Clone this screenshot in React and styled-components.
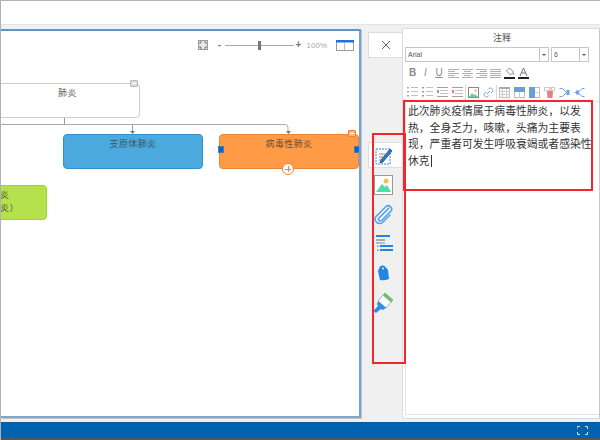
import React from "react";
import styled, { createGlobalStyle } from "styled-components";

const GlobalStyle = createGlobalStyle`
  html, body {
    margin: 0;
    padding: 0;
    background: #fff;
  }
  body {
    font-family: "Liberation Sans", "Noto Sans CJK SC", sans-serif;
  }
`;

const CJK = `"Liberation Sans", "Noto Sans CJK SC", sans-serif`;

const Window = styled.div`
  position: relative;
  width: 600px;
  height: 440px;
  display: flex;
  flex-direction: column;
  box-sizing: border-box;
  border-top: 1px solid #b4b4b4;
  border-left: 1px solid #b0b0b0;
  overflow: hidden;
`;

const TopBar = styled.div`
  height: 23px;
  flex: none;
  background: #fff;
`;

const Main = styled.div`
  flex: 1;
  display: flex;
  min-height: 0;
  background: #f0f0f0;
  padding-top: 4px;
  border-top: 1px solid #e4e4e4;
`;

const Canvas = styled.div`
  position: relative;
  width: 360px;
  height: 389px;
  flex: none;
  box-sizing: border-box;
  background: #fff;
  border-top: 2px solid #5b97cb;
  border-right: 2px solid #6ea3d2;
  border-bottom: 2px solid #7ba7cc;
  box-shadow: 1px 1px 0 #c4c4c4;
  overflow: hidden;
`;

const ZoomBar = styled.div`
  position: absolute;
  top: 7px;
  right: 5px;
  display: flex;
  align-items: center;
  height: 14px;
  color: #777;
`;

const ZoomSign = styled.span`
  font-size: 10px;
  font-weight: bold;
  line-height: 10px;
  width: 8px;
  text-align: center;
  color: #777;
`;

const ZoomTrack = styled.div`
  position: relative;
  width: 69px;
  height: 1px;
  margin: 0 1px;
  background: #aaa;
`;

const ZoomThumb = styled.div`
  position: absolute;
  left: 33px;
  top: -4px;
  width: 3px;
  height: 9px;
  background: #777;
`;

const ZoomValue = styled.span`
  font-size: 8px;
  color: #a8a8a8;
  margin: 0 9px 0 4px;
`;

const Links = styled.svg`
  position: absolute;
  left: 0;
  top: 0;
`;

const tones = {
  plain: { bg: "#fff", line: "#cdcdcd", text: "#5f5f5f" },
  blue: { bg: "#4ba9dd", line: "#2f92cc", text: "#3a5668" },
  orange: { bg: "#ff9a47", line: "#f28233", text: "#6f4f34" },
  green: { bg: "#b5e24c", line: "#9ed133", text: "#4c5c32" },
};

const MapNode = styled.div`
  position: absolute;
  left: ${(p) => p.$x}px;
  top: ${(p) => p.$y}px;
  width: ${(p) => p.$w}px;
  height: 35px;
  box-sizing: border-box;
  padding: 3px 0 0 ${(p) => p.$inset || 0}px;
  background: ${(p) => tones[p.$tone].bg};
  border: 1px solid ${(p) => tones[p.$tone].line};
  border-radius: 4px;
  color: ${(p) => tones[p.$tone].text};
  font-family: ${CJK};
  font-size: 9px;
  letter-spacing: 0.4px;
  line-height: 13px;
  text-align: ${(p) => (p.$inset ? "left" : "center")};
  white-space: pre;
`;

const NoteMark = styled.div`
  position: absolute;
  left: ${(p) => p.$x}px;
  top: ${(p) => p.$y}px;
  width: 8px;
  height: 7px;
  box-sizing: border-box;
  background: ${(p) => p.$bg};
  border: 1px solid ${(p) => p.$line};
  border-radius: 1px;
  &::after {
    content: "";
    display: block;
    margin: 2px 1px 0;
    height: 1px;
    background: ${(p) => p.$mark};
  }
`;

const Handle = styled.div`
  position: absolute;
  left: ${(p) => p.$x}px;
  top: 115px;
  width: 6px;
  height: 7px;
  background: #0f62c8;
  border: 0.5px solid #4a79b0;
  box-sizing: border-box;
`;

const AddButton = styled.div`
  position: absolute;
  left: 281px;
  top: 132px;
  width: 12px;
  height: 12px;
  box-sizing: border-box;
  border-radius: 50%;
  background: #fff;
  border: 1px solid #f28233;
  &::before,
  &::after {
    content: "";
    position: absolute;
    background: #f28233;
  }
  &::before {
    left: 2px;
    top: 4.500px;
    width: 6px;
    height: 1px;
  }
  &::after {
    left: 4.500px;
    top: 2px;
    width: 1px;
    height: 6px;
  }
`;

const SideColumn = styled.div`
  width: 41px;
  flex: none;
  display: flex;
  flex-direction: column;
  align-items: flex-end;
`;

const CloseTab = styled.div`
  width: 34px;
  height: 26px;
  margin-top: 3px;
  box-sizing: border-box;
  background: #fff;
  border: 1px solid #dcdcdc;
  border-right: none;
  display: flex;
  align-items: center;
  justify-content: center;
`;

const TabList = styled.div`
  margin-top: 84px;
  width: 34px;
  display: flex;
  flex-direction: column;
`;

const Tab = styled.div`
  height: ${(p) => (p.$active ? 26 : 29.500)}px;
  display: flex;
  align-items: center;
  justify-content: center;
  padding-right: 4px;
  box-sizing: border-box;
  margin-bottom: ${(p) => (p.$active ? 2 : 0)}px;
  background: ${(p) => (p.$active ? "#fff" : "transparent")};
  border: ${(p) => (p.$active ? "1px solid #dcdcdc" : "none")};
  border-right: none;
`;

const NotePanel = styled.div`
  flex: 1;
  height: 391px;
  margin-top: -1px;
  box-sizing: border-box;
  display: flex;
  flex-direction: column;
  background: #fff;
  border-top: 1px solid #dcdcdc;
  border-left: 1px solid #dcdcdc;
  border-bottom: 1px solid #dcdcdc;
  border-right: 1px solid #c8c8c8;
  padding: 0 0 3px 2px;
`;

const PanelTitle = styled.div`
  height: 18px;
  line-height: 18px;
  text-align: center;
  font-family: ${CJK};
  font-size: 9px;
  color: #555;
`;

const FontRow = styled.div`
  display: flex;
  gap: 2px;
  height: 15px;
  flex: none;
`;

const SelectBox = styled.div`
  width: ${(p) => p.$w}px;
  box-sizing: border-box;
  border: 1px solid #c6c6c6;
  display: flex;
  align-items: center;
  font-size: 7px;
  color: #555;
  padding-left: 2px;
`;

const SelectLabel = styled.span`
  flex: 1;
`;

const SelectArrow = styled.span`
  width: 8px;
  height: 100%;
  border-left: 1px solid #c6c6c6;
  display: flex;
  align-items: center;
  justify-content: center;
  &::after {
    content: "";
    border-left: 2px solid transparent;
    border-right: 2px solid transparent;
    border-top: 2px solid #555;
  }
`;

const ToolRow = styled.div`
  display: flex;
  align-items: center;
  gap: ${(p) => p.$gap}px;
  height: 18px;
  flex: none;
  padding-left: ${(p) => p.$pad}px;
  margin-top: ${(p) => p.$top || 0}px;
`;

const Letter = styled.span`
  width: ${(p) => p.$w || 11}px;
  text-align: center;
  font-size: 10px;
  line-height: 12px;
  color: #8a8a8a;
  font-weight: ${(p) => (p.$bold ? "bold" : "normal")};
  font-style: ${(p) => (p.$italic ? "italic" : "normal")};
  text-decoration: ${(p) => (p.$under ? "underline" : "none")};
`;

const Separator = styled.span`
  width: 1px;
  height: 15px;
  background: #dadada;
  margin: 0 -2px;
`;

const Editor = styled.div`
  flex: 1;
  padding: 1px 0 0 2px;
  border-top: 1px solid #e6e6e6;
  border-left: 1px solid #e4e4e4;
  border-bottom: 1px solid #e4e4e4;
  font-family: ${CJK};
  font-size: 10.8px;
  line-height: 16.6px;
  white-space: nowrap;
  color: #333;
`;

const Caret = styled.span`
  display: inline-block;
  width: 1px;
  height: 12px;
  margin-left: 1px;
  vertical-align: -2px;
  background: #333;
`;

const StatusBar = styled.div`
  height: 15px;
  flex: none;
  display: flex;
  align-items: center;
  justify-content: flex-end;
  padding-right: 12px;
  background: #0063b1;
  border-top: 1px solid #0a5a9e;
  border-bottom: 2px solid #555;
`;

const RedBox = styled.div`
  position: absolute;
  left: ${(p) => p.$x}px;
  top: ${(p) => p.$y}px;
  width: ${(p) => p.$w}px;
  height: ${(p) => p.$h}px;
  box-sizing: border-box;
  border: 2px solid #f5252b;
  pointer-events: none;
`;

const Icon = ({ w = 11, h = 11, vw, vh, children }) => (
  <svg width={w} height={h} viewBox={`0 0 ${vw || w} ${vh || h}`} fill="none">
    {children}
  </svg>
);

const AlignIcon = ({ rows }) => (
  <Icon w={11} h={9}>
    {rows.map(([x, len], i) => (
      <rect key={i} x={x} y={i * 2} width={len} height="1" fill="#b0b0b0" />
    ))}
  </Icon>
);

const ColorIcon = ({ children }) => (
  <Icon w={11} h={12}>
    {children}
    <rect x="0" y="10" width="11" height="2" fill="#222" />
  </Icon>
);

const ListIcon = ({ dots }) => (
  <Icon w={11} h={10}>
    {[1, 5, 9].map((y) => (
      <g key={y}>
        <rect x="0" y={y - 1} width="2" height="1.500" fill={dots} />
        <rect x="4" y={y - 1} width="7" height="1" fill="#c0c0c0" />
      </g>
    ))}
  </Icon>
);

const IndentIcon = ({ mark }) => (
  <Icon w={11} h={10}>
    <rect x="0" y="0" width="11" height="1" fill="#a0a0a0" />
    <rect x="3" y="3" width="8" height="1" fill="#c0c0c0" />
    <rect x="3" y="6" width="8" height="1" fill="#c0c0c0" />
    <rect x="0" y="9" width="11" height="1" fill="#a0a0a0" />
    <rect x="0" y="3" width="2" height="3" fill={mark} />
  </Icon>
);

const TableIcon = ({ head, col }) => (
  <Icon w={11} h={11}>
    <rect x=".5" y=".5" width="10" height="10" stroke="#bbb" />
    {head && <rect x="0" y="0" width="11" height="5" fill="#6a9fd8" />}
    {col && <rect x="0" y="0" width="6" height="11" fill="#6a9fd8" />}
    {!head && !col && (
      <>
        <rect x="0" y="0" width="11" height="2" fill="#aaa" />
        <path d="M0 4.500h11M0 7.500h11M3.500 2v9M7.500 2v9" stroke="#ccc" />
      </>
    )}
    {head && <path d="M5.500 5v6" stroke="#ccc" />}
    {col && <path d="M6 5.500h5" stroke="#ccc" />}
  </Icon>
);

const MapLinks = () => (
  <Links width="358" height="200" viewBox="0 0 358 200" fill="none">
    <path d="M63.500 87v6" stroke="#999" />
    <path d="M0 93.500h284q3 0 3 3v5" stroke="#aaa" />
    <path d="M131.500 94v7" stroke="#999" />
    <path d="M129 100h5l-2.500 3zM285 100h5l-2.500 3z" fill="#777" />
  </Links>
);

const FitIcon = () => (
  <Icon w={10} h={10}>
    <rect x=".5" y=".5" width="9" height="9" stroke="#999" fill="#e8e8e8" />
    <path d="M2 4V2h2M6 2h2v2M8 6v2H6M4 8H2V6" stroke="#777" />
  </Icon>
);

const App = () => (
  <>
    <GlobalStyle />
    <Window>
      <TopBar />
      <Main>
        <Canvas>
          <MapLinks />
          <MapNode $x={-6} $y={52} $w={145} $tone="plain">
            肺炎
          </MapNode>
          <NoteMark $x={129} $y={49} $bg="#ddd" $line="#bbb" $mark="#fff" />
          <MapNode $x={62} $y={103} $w={140} $tone="blue">
            支原体肺炎
          </MapNode>
          <MapNode $x={218} $y={103} $w={140} $tone="orange">
            病毒性肺炎
          </MapNode>
          <NoteMark $x={347} $y={99} $bg="#ffb880" $line="#f28233" $mark="#fff" />
          <Handle $x={217} />
          <Handle $x={353} />
          <AddButton />
          <MapNode $x={-60} $y={154} $w={106} $tone="green" $inset={58}>
            {"炎\n炎）"}
          </MapNode>
          <ZoomBar>
            <FitIcon />
            <ZoomSign style={{ marginLeft: 8 }}>-</ZoomSign>
            <ZoomTrack>
              <ZoomThumb />
            </ZoomTrack>
            <ZoomSign>+</ZoomSign>
            <ZoomValue>100%</ZoomValue>
            <Icon w={18} h={11}>
              <rect x=".5" y=".5" width="17" height="10" stroke="#999" />
              <rect x="0" y="0" width="18" height="2.500" fill="#1a73e0" />
              <path d="M8.500 3v7" stroke="#9cc3ea" />
            </Icon>
          </ZoomBar>
        </Canvas>

        <SideColumn>
          <CloseTab>
            <Icon w={10} h={10}>
              <path d="M1 1l8 8M9 1l-8 8" stroke="#666" />
            </Icon>
          </CloseTab>
          <TabList>
            <Tab $active>
              <Icon w={18} h={19}>
                <rect x="1" y="3" width="14" height="15" stroke="#2a8ae0" strokeDasharray="2 1" />
                <path d="M4 8h6M4 11h4M4 14h3" stroke="#888" />
                <path d="M6 14l9-11 2 2-9 11-3 1z" fill="#1f7fd8" stroke="#222" strokeWidth=".6" />
              </Icon>
            </Tab>
            <Tab>
              <Icon w={19} h={20}>
                <rect x=".5" y=".5" width="18" height="19" fill="#fff" stroke="#999" />
                <circle cx="12" cy="6" r="2.500" fill="#f8bd55" />
                <path d="M2 17l6-8 3 3 2-2 4 7z" fill="#4fdca6" />
              </Icon>
            </Tab>
            <Tab>
              <Icon w={20} h={22}>
                <path
                  d="M16 5L6 15c-1.500 1.700 1 4 2.700 2.500L18 8c2.500-3-1.800-7-5-4.500L3 13.500c-3 4 2 9 6.500 6L17 12"
                  stroke="#4aa0ee"
                  strokeWidth="1.500"
                  strokeLinecap="round"
                />
              </Icon>
            </Tab>
            <Tab>
              <Icon w={20} h={18}>
                <rect x="3" y="0" width="14" height="2" fill="#1f86e8" />
                <rect x="3" y="4" width="9" height="2" fill="#aaa" />
                <rect x="3" y="7" width="9" height="2" fill="#bbb" />
                <rect x="7" y="10" width="13" height="2" fill="#1f86e8" />
                <rect x="7" y="14" width="13" height="2" fill="#1f86e8" />
                <rect x="0" y="1" width="1.500" height="1.500" fill="#888" />
                <rect x="4" y="10.500" width="1.500" height="1.500" fill="#888" />
                <rect x="4" y="14.500" width="1.500" height="1.500" fill="#888" />
              </Icon>
            </Tab>
            <Tab>
              <Icon w={11} h={16}>
                <path d="M2 1.500Q5 -.5 7 1.500L10 5 11 14Q6 16 2 15L0 6z" fill="#1f86e8" />
                <circle cx="5" cy="3.500" r=".9" fill="#fff" />
              </Icon>
            </Tab>
            <Tab>
              <Icon w={21} h={22}>
                <path d="M12 1l8 7-7 8-8-7z" fill="#fff" stroke="#aaa" />
                <path d="M12 1l8 7-2 2.500-8-7z" fill="#6cc070" />
                <path d="M5 9l8 7-3 2-2-1-5 4-3-2 5-5-1-2z" fill="#2f8fe6" />
              </Icon>
            </Tab>
          </TabList>
        </SideColumn>

        <NotePanel>
          <PanelTitle>注释</PanelTitle>
          <FontRow>
            <SelectBox $w={144}>
              <SelectLabel>Arial</SelectLabel>
              <SelectArrow />
            </SelectBox>
            <SelectBox $w={38}>
              <SelectLabel>6</SelectLabel>
              <SelectArrow />
            </SelectBox>
          </FontRow>
          <ToolRow $gap={3} $pad={2} $top={2}>
            <Letter $bold>B</Letter>
            <Letter $italic $w={9}>I</Letter>
            <Letter $under $w={12}>U</Letter>
            <AlignIcon rows={[[0, 11], [0, 7], [0, 11], [0, 7], [0, 11]]} />
            <AlignIcon rows={[[0, 11], [2, 7], [0, 11], [2, 7], [0, 11]]} />
            <AlignIcon rows={[[0, 11], [4, 7], [0, 11], [4, 7], [0, 11]]} />
            <AlignIcon rows={[[0, 11], [0, 11], [0, 11], [0, 11], [0, 11]]} />
            <ColorIcon>
              <path d="M5.500 1l4 4-3 3-4-4zM9 6l1 2" stroke="#888" fill="#fff" />
            </ColorIcon>
            <ColorIcon>
              <path d="M2 9l3.500-8 3.500 8M3.500 6h4" stroke="#777" />
            </ColorIcon>
          </ToolRow>
          <ToolRow $gap={4} $pad={2} $top={1}>
            <ListIcon dots="#aaa" />
            <ListIcon dots="#999" />
            <IndentIcon mark="#6aa5e5" />
            <IndentIcon mark="#e57a7a" />
            <Separator />
            <Icon w={11} h={11}>
              <rect x=".5" y=".5" width="10" height="10" stroke="#888" fill="#fff" />
              <path d="M1 10l3-4 2 2 1-1 3 3z" fill="#6ccf9f" />
              <circle cx="7.500" cy="3.500" r="1.200" fill="#f5c04a" />
            </Icon>
            <Icon w={11} h={11}>
              <path
                d="M4 7l3-3M5 2.500l1-1c2-1.500 5 1 3.500 3l-1.500 1.500M6 8.500l-1 1c-2 1.500-5-1-3.500-3L3 5"
                stroke="#6fa5dc"
              />
            </Icon>
            <Separator />
            <TableIcon />
            <TableIcon head />
            <TableIcon col />
            <Icon w={11} h={11}>
              <rect x=".5" y=".5" width="10" height="3" stroke="#ccc" />
              <path d="M3 4h6l-.5 7h-5z" fill="#e58080" />
              <path d="M5 2h3" stroke="#e58080" />
            </Icon>
            <Icon w={11} h={11}>
              <path d="M.5 1.500h3l4 4-4 4h-3M7 5.500h3.500" stroke="#6aa5e5" />
              <rect x="7.500" y="3" width="3" height="5" fill="#6aa5e5" />
            </Icon>
            <Icon w={11} h={11}>
              <path d="M10.500 1.500H8l-4 4 4 4h2.500M4 5.500H.5" stroke="#6aa5e5" />
              <rect x="2" y="3.500" width="3" height="4" fill="#6aa5e5" />
            </Icon>
          </ToolRow>
          <Editor>
            此次肺炎疫情属于病毒性肺炎，以发
            <br />
            热，全身乏力，咳嗽，头痛为主要表
            <br />
            现，严重者可发生呼吸衰竭或者感染性
            <br />
            休克
            <Caret />
          </Editor>
        </NotePanel>
      </Main>
      <StatusBar>
        <Icon w={11} h={9}>
          <path d="M0 3V.5h3M8 .5h2.500V3M10.500 6v2.500H8M3 8.500H.5V6" stroke="#cfe2f3" />
        </Icon>
      </StatusBar>
      <RedBox $x={402} $y={99} $w={190} $h={91} />
      <RedBox $x={371} $y={132} $w={34} $h={231} />
    </Window>
  </>
);

export default App;
